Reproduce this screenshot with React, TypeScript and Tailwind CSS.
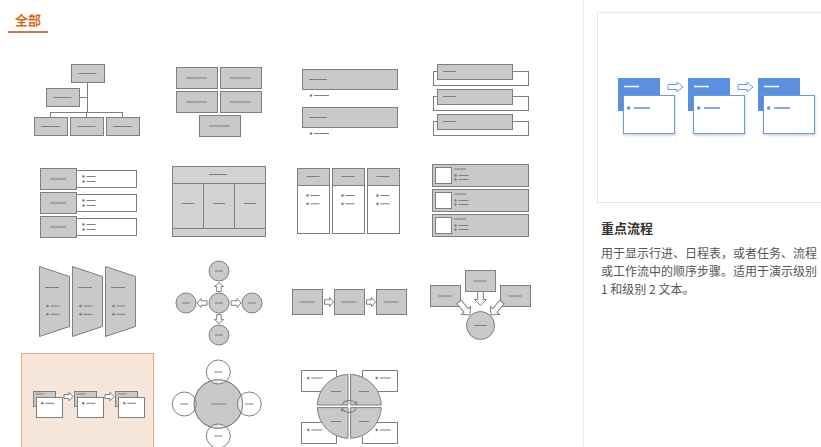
import React from "react"

const G = "#c9c9c9"
const S = "#7f7f7f"

type BoxProps = { x: number; y: number; w: number; h: number; fill?: string; dash?: number; dy?: number }

const Box = ({ x, y, w, h, fill = G, dash = 0, dy }: BoxProps) => (
  <g>
    <rect x={x + 0.5} y={y + 0.5} width={w} height={h} fill={fill} stroke={S} />
    {dash > 0 && (
      <line
        x1={x + w / 2 - dash / 2}
        x2={x + w / 2 + dash / 2}
        y1={y + (dy ?? h / 2) + 0.5}
        y2={y + (dy ?? h / 2) + 0.5}
        stroke={S}
      />
    )}
  </g>
)

const Dash = ({ x1, x2, y, c = S }: { x1: number; x2: number; y: number; c?: string }) => (
  <line x1={x1} x2={x2} y1={y + 0.5} y2={y + 0.5} stroke={c} />
)

const Bullet = ({ x, y, len = 10, c = S }: { x: number; y: number; len?: number; c?: string }) => (
  <g>
    <circle cx={x} cy={y} r={1.3} fill={c} />
    <line x1={x + 3} x2={x + 3 + len} y1={y} y2={y} stroke={c} />
  </g>
)

// hollow block arrow pointing right, rotated by a
const Arrow = ({
  x,
  y,
  l = 10,
  h = 9,
  s = 4,
  hd = 4,
  a = 0,
  c = S,
}: {
  x: number
  y: number
  l?: number
  h?: number
  s?: number
  hd?: number
  a?: number
  c?: string
}) => (
  <polygon
    transform={`translate(${x} ${y}) rotate(${a})`}
    points={`0,${-s / 2} ${l - hd},${-s / 2} ${l - hd},${-h / 2} ${l},0 ${l - hd},${h / 2} ${l - hd},${s / 2} 0,${s / 2}`}
    fill="white"
    stroke={c}
    strokeLinejoin="miter"
  />
)

const OrgChart = () => (
  <>
    <line x1={65.5} x2={65.5} y1={28} y2={58} stroke={S} />
    <line x1={57} x2={65.5} y1={43.5} y2={43.5} stroke={S} />
    <line x1={28.5} x2={100.5} y1={58.5} y2={58.5} stroke={S} />
    {[28.5, 64.5, 100.5].map((x) => (
      <line key={x} x1={x} x2={x} y1={58} y2={63} stroke={S} />
    ))}
    <Box x={49} y={10} w={33} h={18} dash={18} />
    <Box x={24} y={34} w={33} h={18} dash={18} />
    {[12, 48, 84].map((x) => (
      <Box key={x} x={x} y={63} w={33} h={18} dash={18} />
    ))}
  </>
)

const Blocks = () => (
  <>
    <Box x={23} y={13} w={41} h={21} dash={21} />
    <Box x={67} y={13} w={41} h={21} dash={21} />
    <Box x={23} y={37} w={41} h={21} dash={21} />
    <Box x={67} y={37} w={41} h={21} dash={21} />
    <Box x={46} y={61} w={41} h={21} dash={21} />
  </>
)

const BulletBars = () => (
  <>
    {[15, 53].map((y) => (
      <g key={y}>
        <Box x={18} y={y} w={95} h={20} />
        <Dash x1={25} x2={43} y={y + 10} />
        <Bullet x={27} y={y + 26.5} len={15} />
      </g>
    ))}
  </>
)

const Stacked = () => (
  <>
    {[0, 25, 50].map((o) => (
      <g key={o}>
        <Box x={18} y={17 + o} w={95} h={14} fill="white" />
        <Box x={22} y={10 + o} w={75} h={15} />
        <Dash x1={28} x2={41} y={17 + o} />
      </g>
    ))}
  </>
)

const LabeledList = () => (
  <>
    {[0, 24, 48].map((o) => (
      <g key={o}>
        <Box x={18} y={14 + o} w={36} h={21} dash={16} />
        <Box x={54} y={16 + o} w={60} h={17} fill="white" />
        <Bullet x={61.5} y={22.5 + o} len={9} />
        <Bullet x={61.5} y={27.5 + o} len={9} />
      </g>
    ))}
  </>
)

const Table = () => (
  <>
    <rect x={19.5} y={12.5} width={93} height={70} fill="#d2d2d2" stroke={S} />
    <line x1={19.5} x2={112.5} y1={29.5} y2={29.5} stroke={S} />
    <line x1={19.5} x2={112.5} y1={74.5} y2={74.5} stroke={S} />
    <line x1={50.5} x2={50.5} y1={29.5} y2={74.5} stroke={S} />
    <line x1={81.5} x2={81.5} y1={29.5} y2={74.5} stroke={S} />
    <Dash x1={56} x2={74} y={20} />
    {[35, 66, 97].map((x) => (
      <Dash key={x} x1={x - 6} x2={x + 6} y={49} />
    ))}
  </>
)

const Columns = () => (
  <>
    {[13, 48, 83].map((x) => (
      <g key={x}>
        <rect x={x + 0.5} y={14.5} width={32} height={65} fill="white" stroke={S} />
        <Box x={x} y={14} w={32} h={17} dash={13} dy={8} />
        <Bullet x={x + 10.5} y={41.5} len={9} />
        <Bullet x={x + 10.5} y={49.8} len={9} />
      </g>
    ))}
  </>
)

const PictureList = () => (
  <>
    {[0, 25, 50].map((o) => (
      <g key={o}>
        <Box x={17} y={10 + o} w={96} h={22} />
        <rect x={20.5} y={13.5 + o} width={16} height={16} fill="white" stroke={S} />
        <Dash x1={39} x2={51} y={14.5 + o} />
        <Bullet x={40.5} y={21.5 + o} len={10} />
        <Bullet x={40.5} y={25.5 + o} len={10} />
      </g>
    ))}
  </>
)

const Trapezoids = () => (
  <>
    {[0, 33, 66].map((o) => (
      <g key={o}>
        <polygon
          points={`${17.5 + o},12.5 ${47.5 + o},22.5 ${47.5 + o},72.5 ${17.5 + o},82.5`}
          fill={G}
          stroke={S}
        />
        <Dash x1={23 + o} x2={37 + o} y={33} />
        <Bullet x={25.5 + o} y={52} len={9} />
        <Bullet x={25.5 + o} y={60.3} len={9} />
      </g>
    ))}
  </>
)

const Circ = ({ cx, cy, r, d, fill = G }: { cx: number; cy: number; r: number; d: number; fill?: string }) => (
  <g>
    <circle cx={cx} cy={cy} r={r} fill={fill} stroke={S} />
    {d > 0 && <line x1={cx - d / 2} x2={cx + d / 2} y1={cy} y2={cy} stroke={S} />}
  </g>
)

const Radial = () => (
  <>
    <Circ cx={66} cy={49} r={10} d={8} />
    <Circ cx={66} cy={17} r={10} d={8} />
    <Circ cx={66} cy={81} r={10} d={8} />
    <Circ cx={33} cy={49} r={10} d={8} />
    <Circ cx={99} cy={49} r={10} d={8} />
    <Arrow x={78} y={49} l={10} h={9} s={4.5} hd={4} />
    <Arrow x={54} y={49} l={10} h={9} s={4.5} hd={4} a={180} />
    <Arrow x={66} y={37.5} l={9} h={9} s={4.5} hd={4} a={-90} />
    <Arrow x={66} y={60.5} l={9} h={9} s={4.5} hd={4} a={90} />
  </>
)

const Process = () => (
  <>
    {[8, 50, 92].map((x) => (
      <Box key={x} x={x} y={35} w={30} h={25} dash={15} />
    ))}
    <Arrow x={40.5} y={48} l={9} h={9} s={4.5} hd={4} />
    <Arrow x={82.5} y={48} l={9} h={9} s={4.5} hd={4} />
  </>
)

const Converge = () => (
  <>
    <Circ cx={65.5} cy={71.5} r={14} d={13} />
    <Box x={50} y={16} w={30} h={21} dash={13} />
    <Box x={15} y={31} w={30} h={21} dash={13} />
    <Box x={85} y={31} w={30} h={21} dash={13} />
    <Arrow x={65.5} y={37.5} l={14} h={12} s={5.5} hd={6} a={90} />
    <Arrow x={44} y={48} l={17} h={12} s={5.5} hd={6} a={50} />
    <Arrow x={87} y={48} l={17} h={12} s={5.5} hd={6} a={130} />
  </>
)

const FocusFlow = () => (
  <>
    {[0, 41, 82].map((o) => (
      <g key={o}>
        <rect x={10.5 + o} y={36.5} width={22} height={15} fill={G} stroke={S} />
        <Dash x1={12.7 + o} x2={21.3 + o} y={38.5} />
        <rect x={13.5 + o} y={42.5} width={26} height={20} fill="white" stroke={S} />
        <Bullet x={19.3 + o} y={48.3} len={9} />
      </g>
    ))}
    <Arrow x={41} y={41.5} l={9} h={8.5} s={4} hd={4} />
    <Arrow x={82} y={41.5} l={9} h={8.5} s={4} hd={4} />
  </>
)

const Cycle = () => {
  const smalls: [number, number][] = [
    [65.3, 18],
    [65.3, 82],
    [31.3, 50],
    [96.3, 50],
  ]
  return (
    <>
      <circle cx={65.3} cy={50} r={24.3} fill={G} stroke={S} />
      {smalls.map(([x, y]) => (
        <circle key={`${x}${y}`} cx={x} cy={y} r={12} fill="rgba(255,255,255,0.6)" stroke={S} />
      ))}
      <circle cx={65.3} cy={50} r={24.3} fill="none" stroke={S} />
      <line x1={58} x2={73} y1={50} y2={50} stroke={S} />
      {smalls.map(([x, y]) => (
        <line key={`d${x}${y}`} x1={x - 4} x2={x + 4} y1={y} y2={y} stroke={S} />
      ))}
    </>
  )
}

const quad = (cx: number, cy: number, r: number, g: number, sx: number, sy: number) => {
  const rr = Math.sqrt(r * r - g * g)
  const x0 = cx + sx * g
  const y0 = cy + sy * g
  const sweep = sx * sy > 0 ? 0 : 1
  return `M ${x0} ${y0} L ${x0} ${cy + sy * rr} A ${r} ${r} 0 0 ${sweep} ${cx + sx * rr} ${y0} Z`
}

const Matrix = () => {
  const cx = 65.3
  const cy = 52.3
  return (
    <>
      {[
        [17, 16, 24.3, 24],
        [78, 16, 92.7, 24],
        [17, 68, 24.3, 76],
        [78, 68, 92.7, 76],
      ].map(([x, y, bx, by]) => (
        <g key={`${x}${y}`}>
          <rect x={x + 0.5} y={y + 0.5} width={35} height={21} fill="white" stroke={S} />
          <Bullet x={bx} y={by} len={11} />
        </g>
      ))}
      {[
        [-1, -1],
        [1, -1],
        [-1, 1],
        [1, 1],
      ].map(([sx, sy]) => (
        <path key={`${sx}${sy}`} d={quad(cx, cy, 32, 1.3, sx, sy)} fill={G} stroke={S} />
      ))}
      <Dash x1={47} x2={57} y={37} />
      <Dash x1={75} x2={85} y={37} />
      <Dash x1={47} x2={57} y={67} />
      <Dash x1={75} x2={85} y={67} />
      <path d="M 58.5 51 A 7 5 0 0 1 71.5 49" fill="none" stroke={S} strokeWidth={1.1} />
      <path d="M 70 48 L 72.5 50.5 L 73 47" fill="none" stroke={S} strokeWidth={1.1} />
      <path d="M 72 54 A 7 5 0 0 1 59 56" fill="none" stroke={S} strokeWidth={1.1} />
      <path d="M 60.5 57 L 58 54.5 L 57.5 58" fill="none" stroke={S} strokeWidth={1.1} />
    </>
  )
}

const items: React.FC[] = [
  OrgChart,
  Blocks,
  BulletBars,
  Stacked,
  LabeledList,
  Table,
  Columns,
  PictureList,
  Trapezoids,
  Radial,
  Process,
  Converge,
  FocusFlow,
  Cycle,
  Matrix,
]

const B = "#5b8fe0"
const BS = "#6f97d9"

const Preview = () => (
  <svg width={240} height={190} viewBox="0 0 240 190">
    <defs>
      <filter id="sh" x="-20%" y="-20%" width="140%" height="150%">
        <feDropShadow dx="0.5" dy="1.5" stdDeviation="1" floodColor="#000" floodOpacity="0.18" />
      </filter>
    </defs>
    {[0, 70, 140].map((o) => (
      <g key={o}>
        <rect x={20 + o} y={65} width={42} height={33} fill={B} />
        <line x1={26 + o} x2={41 + o} y1={73.5} y2={73.5} stroke="white" strokeWidth={1.5} />
        <rect x={25.5 + o} y={82.5} width={51} height={38} fill="white" stroke={BS} filter="url(#sh)" />
        <circle cx={30.7 + o} cy={95} r={1.8} fill={B} />
        <line x1={36 + o} x2={52 + o} y1={95} y2={95} stroke={B} strokeWidth={1.5} />
      </g>
    ))}
    <Arrow x={70} y={74} l={15} h={10} s={5} hd={6} c={BS} />
    <Arrow x={140} y={74} l={15} h={10} s={5} hd={6} c={BS} />
  </svg>
)

export default function App() {
  return (
    <div
      className="w-[821px] h-[447px] bg-white flex overflow-hidden"
      style={{ fontFamily: '"Noto Sans CJK SC", "Noto Sans", sans-serif' }}
    >
      <div className="w-[583px] shrink-0 flex flex-col">
        <div className="pl-[8px] pt-[6px]">
          <div className="inline-block px-[7px] pb-[2px] border-b-2 border-[#c97a45] text-[13px] leading-[19px] font-bold text-[#d2691e]">
            全部
          </div>
        </div>
        <div className="ml-[22px] mt-[21px] grid grid-cols-[repeat(4,131px)] auto-rows-[100px]">
          {items.map((Diagram, i) => (
            <div
              key={i}
              className={
                i === 12
                  ? "bg-[#f6e6d9] border border-[#e3a98a] -m-px"
                  : ""
              }
            >
              <svg width={131} height={100} viewBox="0 0 131 100" className={i === 12 ? "m-px" : ""}>
                <Diagram />
              </svg>
            </div>
          ))}
        </div>
      </div>
      <div className="flex-1 border-l border-[#efefef] pl-[13px] pt-[12px] min-w-0">
        <div className="w-[240px] h-[191px] border border-[#e6e6e6]">
          <Preview />
        </div>
        <div className="pl-[4px] w-[222px]">
          <div className="mt-[15px] text-[13px] leading-[20px] font-bold text-[#333333]">重点流程</div>
          <p className="mt-[6px] text-[12px] leading-[18px] text-[#555555]">
            用于显示行进、日程表，或者任务、流程或工作流中的顺序步骤。适用于演示级别 1 和级别 2 文本。
          </p>
        </div>
      </div>
    </div>
  )
}
